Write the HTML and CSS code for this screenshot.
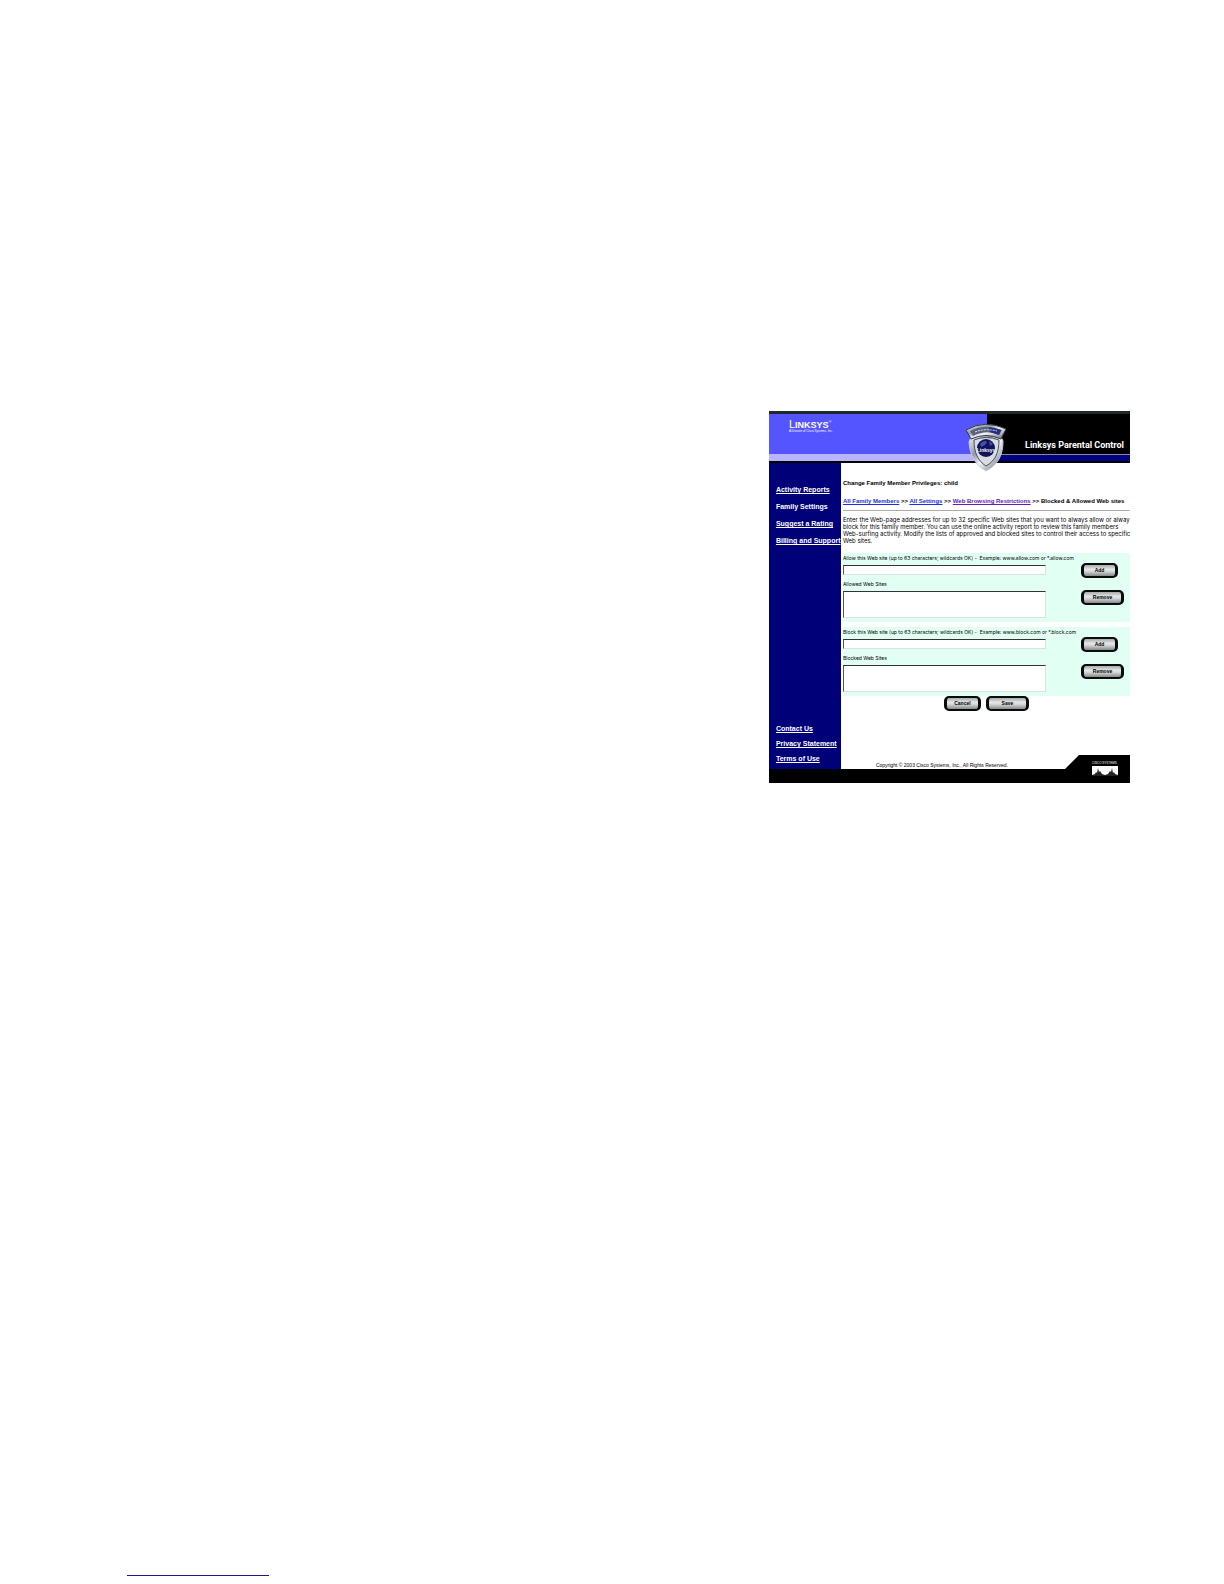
FILE: index.html
```html
<!DOCTYPE html>
<html lang="en">
<head>
    <meta charset="UTF-8">
    <meta name="viewport" content="width=device-width, initial-scale=1.0">
    <title>Linksys Parental Control</title>
    <link rel="stylesheet" href="styles.css">
</head>
<body>
    <div class="panel">
        <header class="header">
            <div class="brand">
                <div class="logo">L<small>INKSYS</small><sup>®</sup></div>
                <div class="tagline">A Division of Cisco Systems, Inc.</div>
            </div>
            <h1>Linksys Parental Control</h1>
            <svg class="shield" viewBox="0 0 42 50" aria-hidden="true">
                <defs>
                    <linearGradient id="metal" x1="0" y1="0" x2="1" y2="1">
                        <stop offset="0" stop-color="#ffffff"/>
                        <stop offset="0.35" stop-color="#8f98a4"/>
                        <stop offset="0.55" stop-color="#f4f6f8"/>
                        <stop offset="1" stop-color="#59606c"/>
                    </linearGradient>
                </defs>
                <path d="M7 13C16 11 27 11 35 13L38 19C38 33 33 43 21 49C10 43 5 33 4 20Z" fill="url(#metal)" stroke="#c8ccd8"/>
                <path d="M9 18Q21 13 34 18C34 31 30 39 21 44C13 39 9 31 9 18Z" fill="#d9dde2" stroke="#4a5060"/>
                <circle cx="21" cy="26" r="9" fill="#10145c"/>
                <path d="M15 22Q19 17 22 20L20 23L16 25ZM24 19L28 22L25 24Z" fill="#4650a8"/>
                <path d="M1 8Q20 -3 41 7L36 17Q21 10 6 17Z" fill="url(#metal)" stroke="#303644"/>
                <path d="M5 9Q20 1 37 8L34 13Q21 7 8 14Z" fill="#59637c"/>
                <path d="M24 5L36 8L34 13L25 10Z" fill="#242d86"/>
                <path d="M10 10Q20 6 32 9" fill="none" stroke="#e8ebf0" stroke-dasharray="2 1"/>
                <text x="21" y="30" text-anchor="middle" class="shield-text">Linksys</text>
            </svg>
        </header>

        <div class="main">
            <nav class="sidebar">
                <ul>
                    <li><a href="#">Activity Reports</a></li>
                    <li>Family Settings</li>
                    <li><a href="#">Suggest a Rating</a></li>
                    <li><a href="#">Billing and Support</a></li>
                </ul>
                <ul class="legal">
                    <li><a href="#">Contact Us</a></li>
                    <li><a href="#">Privacy Statement</a></li>
                    <li><a href="#">Terms of Use</a></li>
                </ul>
            </nav>

            <form class="content">
                <h2>Change Family Member Privileges: child</h2>
                <div class="breadcrumb">
                    <a href="#">All Family Members</a> &gt;&gt; <a href="#">All Settings</a> &gt;&gt; <a href="#" class="visited">Web Browsing Restrictions</a> &gt;&gt; Blocked &amp; Allowed Web sites
                </div>
                <p class="intro">
                    Enter the Web-page addresses for up to 32 specific Web sites that you want to always allow or alway<br>
                    block for this family member. You can use the online activity report to review this family members<br>
                    Web-surfing activity. Modify the lists of approved and blocked sites to control their access to specific<br>
                    Web sites.
                </p>

                <div class="site-box">
                    <div class="fields">
                        <label for="allow">Allow this Web site (up to 63 characters; wildcards OK) -&nbsp; Example: www.allow.com or *.allow.com</label>
                        <input type="text" id="allow">
                        <label for="allowed">Allowed Web Sites</label>
                        <textarea id="allowed"></textarea>
                    </div>
                    <div class="actions">
                        <button type="button">Add</button>
                        <button type="button" class="wide">Remove</button>
                    </div>
                </div>

                <div class="site-box">
                    <div class="fields">
                        <label for="block">Block this Web site (up to 63 characters; wildcards OK) -&nbsp; Example: www.block.com or *.block.com</label>
                        <input type="text" id="block">
                        <label for="blocked">Blocked Web Sites</label>
                        <textarea id="blocked"></textarea>
                    </div>
                    <div class="actions">
                        <button type="button">Add</button>
                        <button type="button" class="wide">Remove</button>
                    </div>
                </div>

                <div class="form-buttons">
                    <button type="button">Cancel</button>
                    <button type="submit" class="wide">Save</button>
                </div>

                <div class="copyright">Copyright © 2003 Cisco Systems, Inc., All Rights Reserved.</div>
            </form>
        </div>

        <footer class="footer">
            <div class="cisco">
                <span>CISCO SYSTEMS</span>
                <svg viewBox="0 0 26 10" aria-hidden="true">
                    <rect width="26" height="10" fill="#fff"/>
                    <path d="M0 9L3 8L4 6L5 7L6 2L7 6L8 5L10 8L13 9L16 8L18 5L19 6L20 2L21 7L22 6L23 8L26 9V10H0Z" fill="#222"/>
                </svg>
            </div>
        </footer>
    </div>

    <div class="page-rule"></div>
</body>
</html>
```

FILE: styles.css
```css
* {
    box-sizing: border-box;
}
body {
    display: flex;
    flex-direction: column;
    min-height: 100vh;
    margin: 0;
    padding: 411px 94px 8px 127px;
    background-color: #fff;
    color: #000;
    font-family: "Liberation Sans", Arial, sans-serif;
    font-size: 6px;
    line-height: 7px;
}
.panel {
    width: 36%;
    min-width: 361px;
    margin-left: auto;
}

/* Header */
.header {
    position: relative;
    display: flex;
    justify-content: space-between;
    height: 52px;
    border-top: 3px solid #20282c;
    border-bottom: 2px solid #000;
    background: linear-gradient(#5555ff 40px, #b8b4ff 40px);
    color: #fff;
}
.brand {
    padding: 5px 0 0 20px;
}
.logo {
    font-size: 11px;
    line-height: 10px;
}
.logo small {
    font-size: 9px;
    font-weight: bold;
}
.logo sup {
    font-size: 4px;
    line-height: 0;
}
.tagline {
    font-size: 3px;
    line-height: 3px;
}
.header h1 {
    width: 143px;
    margin: 0;
    padding: 25px 6px 0 0;
    background: linear-gradient(#000 40px, #8888a0 40px, #8888a0 41px, #000080 41px);
    font-family: Roboto, "Liberation Sans", sans-serif;
    font-size: 9px;
    line-height: 12px;
    text-align: right;
    white-space: nowrap;
}
.shield {
    position: absolute;
    top: 8px;
    right: 123px;
    width: 42px;
    height: 50px;
}
.shield-text {
    fill: #fff;
    font-size: 5px;
    font-weight: bold;
}

/* Body */
.main {
    display: flex;
}
.sidebar {
    display: flex;
    flex-direction: column;
    justify-content: space-between;
    flex: 0 0 72px;
    padding: 18px 0 3px 7px;
    background-color: #000078;
    color: #fff;
    font-size: 7px;
    font-weight: bold;
    line-height: 17px;
    white-space: nowrap;
}
.sidebar ul {
    margin: 0;
    padding: 0;
    list-style: none;
}
.sidebar .legal {
    line-height: 15px;
}
.sidebar a {
    color: #fff;
}
.content {
    flex: 1;
    min-width: 0;
    padding: 16px 0 0 2px;
}
.content h2 {
    margin: 0 0 10px;
    font-size: 6px;
    line-height: 8px;
}
.breadcrumb {
    margin-bottom: 5px;
    padding-bottom: 5px;
    border-bottom: 1px solid #aaa;
    font-weight: bold;
    line-height: 8px;
    white-space: nowrap;
}
.breadcrumb a {
    color: #2030e0;
}
.breadcrumb .visited {
    color: #6020b0;
}
.intro {
    margin: 0 0 9px;
    font-family: Inter, "Liberation Sans", sans-serif;
    white-space: nowrap;
}
.site-box {
    display: flex;
    justify-content: space-between;
    margin-bottom: 5px;
    padding: 1px 0 4px;
    background-color: #e2fff3;
}
.fields {
    flex: 0 0 203px;
    min-width: 0;
}
.fields label {
    display: block;
    height: 11px;
    font-family: Inter, "Liberation Sans", sans-serif;
    font-size: 5px;
    line-height: 8px;
    white-space: nowrap;
}
.fields input, .fields textarea {
    display: block;
    width: 100%;
    margin: 0;
    padding: 1px;
    border: 1px solid #d8e4e0;
    border-top-color: #333;
    border-left-color: #555;
    background-color: #fff;
    font: inherit;
    resize: none;
}
.fields input {
    height: 10px;
    margin-bottom: 5px;
}
.fields textarea {
    height: 27px;
}
.actions {
    display: flex;
    flex-direction: column;
    align-items: flex-start;
    gap: 12px;
    flex: 0 0 49px;
    padding-top: 9px;
}
button {
    width: 37px;
    height: 15px;
    padding: 0;
    border: 2px solid #080c0c;
    border-right-width: 3px;
    border-left-width: 3px;
    border-radius: 5px;
    background: linear-gradient(#aaa, #e4e8e8 40%, #d0d4d4 60%, #888);
    color: #000;
    font-family: inherit;
    font-size: 5px;
    font-weight: bold;
    line-height: 7px;
}
button.wide {
    width: 43px;
}
.form-buttons {
    display: flex;
    gap: 5px;
    margin-top: -5px;
    padding-left: 101px;
}
.copyright {
    padding: 51px 0 0 33px;
    font-size: 5px;
    line-height: 7px;
    white-space: nowrap;
}

/* Footer */
.footer {
    position: relative;
    display: flex;
    justify-content: flex-end;
    margin-top: -14px;
    height: 28px;
    background-color: #000;
    clip-path: polygon(0 14px, calc(100% - 65px) 14px, calc(100% - 51px) 0, 100% 0, 100% 100%, 0 100%);
}
.cisco {
    width: 38px;
    padding-top: 6px;
    color: #fff;
}
.cisco span {
    display: block;
    font-size: 3px;
    line-height: 5px;
    white-space: nowrap;
}
.cisco svg {
    display: block;
    width: 26px;
    height: 10px;
}

.page-rule {
    width: 142px;
    height: 1px;
    margin-top: auto;
    background-color: #1a1a8c;
}
```
